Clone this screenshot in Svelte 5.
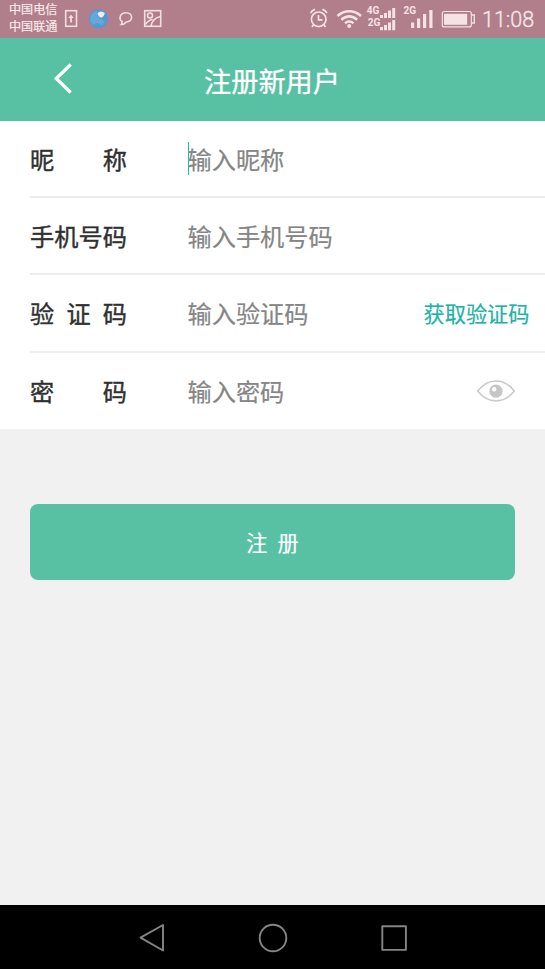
<script>
  const fields = [
    { label: '昵称', hint: '输入昵称', focused: true },
    { label: '手机号码', hint: '输入手机号码' },
    { label: '验证码', hint: '输入验证码', action: '获取验证码' },
    { label: '密码', hint: '输入密码', eye: true }
  ];
</script>

<div class="screen">
  <div class="status">
    <div class="carriers"><span>中国电信</span><span>中国联通</span></div>
    <svg class="left-icons" width="100" height="38" viewBox="63 0 100 38" fill="none" stroke="#f3dde1" stroke-width="1.6">
      <rect x="65.7" y="10.7" width="10.8" height="15.6" />
      <path d="M71 22.500v-6" stroke-width="1.800" />
      <path d="M68.300 18L71 14.600l2.700 3.400z" fill="#f3dde1" stroke="none" />
      <circle cx="98.5" cy="18.7" r="9.5" fill="#5498cf" stroke="none" />
      <path d="M91 15c2-3 4-4 5.500-4l1.500 6 4 3 3 1-3 4-5-2-4 2-3-4z" fill="#65a7da" stroke="none" />
      <path d="M97.500 13q3.500-3 7.200 0-.4 3.500-3.500 4.800-3.200-1.300-3.700-4.800z" fill="#e6f1fa" stroke="none" />
      <path d="M122 21.500c-3.400-2.300-2.400-8.700 4-8.700 7.300 0 7.500 8.900.2 9.200-1.500 2-3 2.500-5 2.500 1.100-1 1-2 .8-3z" />
      <rect x="144.700" y="10.700" width="16" height="15.600" />
      <circle cx="150" cy="15.500" r="2.500" />
      <path d="M145 24.500c3-3.500 5-5 7.500-5M151 26c1-5 4-8.500 9.500-9.500" />
    </svg>
    <svg class="right-icons" width="172" height="38" viewBox="307 0 172 38" fill="none" stroke="#f5e2e5" stroke-width="1.700">
      <circle cx="318.700" cy="19.300" r="7.300" />
      <path d="M318.500 15v4.800h4M310.500 13.200q1.500-2.800 4.500-3.800M322.500 9.400q3 1 4.500 3.800M313.500 25l-1.600 2M324 25l1.600 2" />
      <g stroke-width="2.500">
        <path d="M337.500 16c7-6.200 16.500-6.200 23.500 0M341.300 19.800c5-4.300 10.900-4.300 15.900 0M345 23.300c2.700-2.200 5.800-2.200 8.500 0" />
      </g>
      <circle cx="349.200" cy="26" r="2" fill="#f5e2e5" stroke="none" />
      <g fill="#f5e2e5" stroke="none">
        <text x="366.800" y="14.200">4G</text>
        <text x="367.800" y="26.300">2G</text>
        <text x="403.500" y="14.200">2G</text>
        <path d="M380 15h3v3h-3zM384 13h3v5h-3zM388 10.500h3V18h-3zM392.200 8h3v10h-3zM380 27h3v3.200h-3zM384 25h3v5.200h-3zM388 22.500h3v7.700h-3zM392.200 20h3v10.200h-3z" />
        <path d="M411 22.500h3.200V28H411zM417 18.500h3.200V28H417zM423 14h3.200v14H423zM429.300 10h3.200v18h-3.200z" />
        <rect x="444" y="13.800" width="23.200" height="11" />
      </g>
      <rect x="442.300" y="11.500" width="29" height="15.400" rx="2" stroke-width="1.200" />
      <path d="M472 15h2.300v8H472" stroke-width="1.300" />
    </svg>
    <time>11:08</time>
  </div>

  <header>
    <svg width="20" height="32" viewBox="0 0 20 32" fill="none" stroke="#fff" stroke-width="3.200"><path d="M17.700 1.500L3.200 15.500l14.500 14" /></svg>
    <h1>注册新用户</h1>
  </header>

  <main>
    <div class="form">
      {#each fields as field}
        <div class="row">
          <div class="label">{#each field.label as ch}<span>{ch}</span>{/each}</div>
          <div class="entry" class:focused={field.focused}>{field.hint}</div>
          {#if field.action}<div class="code">{field.action}</div>{/if}
          {#if field.eye}
            <svg class="eye" width="40" height="26" viewBox="0 0 40 26">
              <path d="M1.700 13C12-.5 28-.5 38.200 13 28 26.200 12 26.200 1.700 13z" fill="none" stroke="#c9c9c9" stroke-width="1.500" />
              <circle cx="20" cy="13.200" r="6.600" fill="#c6c6c6" />
              <circle cx="18.200" cy="11.300" r="2.200" fill="#fff" />
            </svg>
          {/if}
        </div>
      {/each}
    </div>
    <div class="submit"><span>注</span><span>册</span></div>
  </main>

  <nav>
    <svg width="28" height="30" viewBox="0 0 28 30"><path d="M25 2v25.500L2.500 14.700z" /></svg>
    <svg width="30" height="30" viewBox="0 0 30 30"><circle cx="15" cy="15" r="13.300" /></svg>
    <svg width="28" height="28" viewBox="0 0 28 28"><rect x="2.300" y="2.300" width="23.600" height="23.600" /></svg>
  </nav>
</div>

<style>
  :global(body) { margin: 0; }
  .screen {
    width: 545px;
    height: 969px;
    display: flex;
    flex-direction: column;
    overflow: hidden;
    background: #f1f1f1;
    font-family: "Noto Sans CJK SC", sans-serif;
  }
  .status {
    flex: none;
    height: 38px;
    display: flex;
    background: #b17f8b;
    color: #f8e9ec;
  }
  .status svg { flex: none; }
  .carriers {
    display: flex;
    flex-direction: column;
    width: 50px;
    padding: 1px 0 0 9px;
    font-size: 12.100px;
    line-height: 16.500px;
    white-space: nowrap;
    -webkit-text-stroke: 0.2px;
  }
  .left-icons { margin-left: 4px; }
  .right-icons { margin-left: 144px; }
  .right-icons text { font: bold 10px Roboto, sans-serif; }
  time {
    margin-left: 3px;
    font: 300 21.500px/40px Roboto, sans-serif;
    -webkit-text-stroke: 0.3px;
  }
  header {
    flex: none;
    height: 83px;
    display: flex;
    align-items: center;
    background: #58c1a4;
    color: #fff;
  }
  header svg { margin: 0 0 1px 53px; }
  h1 {
    margin: 1px 0 0 131px;
    font-size: 27.200px;
    line-height: 40px;
    font-weight: 400;
    -webkit-text-stroke: 0.3px;
  }
  main { flex: 1; }
  .form { background: #fff; }
  .row {
    height: 77px;
    margin-left: 30px;
    display: flex;
    align-items: center;
    box-sizing: border-box;
    border-bottom: 2px solid #ededed;
    font-size: 24.200px;
    line-height: 36px;
  }
  .row:nth-child(n + 2) { height: 77.400px; }
  .row:last-child { height: 76.200px; border: 0; }
  .label {
    width: 97px;
    display: flex;
    justify-content: space-between;
    color: #303030;
    -webkit-text-stroke: 0.4px;
  }
  .label span { width: 24.200px; }
  .entry {
    margin-left: 60.500px;
    flex: 1;
    position: relative;
    color: #858585;
    -webkit-text-stroke: 0.2px;
  }
  .focused::before {
    content: "";
    position: absolute;
    left: 0;
    top: 1px;
    width: 1.500px;
    height: 33px;
    background: #27b9a8;
  }
  .code {
    margin-right: 15.500px;
    font-size: 21.200px;
    color: #22b1a8;
    -webkit-text-stroke: 0.2px;
  }
  .eye { margin: 0 29px 0 0; }
  .submit {
    margin: 75px 30px 0;
    height: 76px;
    border-radius: 8px;
    display: flex;
    align-items: center;
    justify-content: center;
    gap: 10px;
    background: #58c1a4;
    color: #fff;
    font-size: 21.200px;
    -webkit-text-stroke: 0.2px;
  }
  nav {
    flex: none;
    height: 64px;
    box-sizing: border-box;
    display: flex;
    align-items: center;
    padding: 1.600px 0 0 137.500px;
    background: #000;
  }
  nav svg {
    fill: none;
    stroke: #858585;
    stroke-width: 1.900;
    stroke-linejoin: round;
  }
  nav svg + svg { margin-left: 92px; }
</style>
